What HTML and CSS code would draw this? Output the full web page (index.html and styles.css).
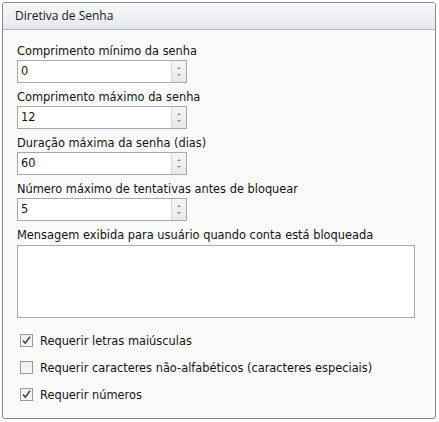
FILE: index.html
```html
<!DOCTYPE html>
<html>
<head>
<meta charset="utf-8">
<link rel="stylesheet" href="styles.css">
</head>
<body>
<div class="panel">
  <div class="header">Diretiva de Senha</div>
  <div class="content">
    <div class="field">
      <div class="label">Comprimento mínimo da senha</div>
      <div class="spin"><span class="val">0</span><span class="btns"><span class="up"></span><span class="down"></span></span></div>
    </div>
    <div class="field">
      <div class="label">Comprimento máximo da senha</div>
      <div class="spin"><span class="val">12</span><span class="btns"><span class="up"></span><span class="down"></span></span></div>
    </div>
    <div class="field">
      <div class="label">Duração máxima da senha (dias)</div>
      <div class="spin"><span class="val">60</span><span class="btns"><span class="up"></span><span class="down"></span></span></div>
    </div>
    <div class="field">
      <div class="label">Número máximo de tentativas antes de bloquear</div>
      <div class="spin"><span class="val">5</span><span class="btns"><span class="up"></span><span class="down"></span></span></div>
    </div>
    <div class="field">
      <div class="label">Mensagem exibida para usuário quando conta está bloqueada</div>
      <div class="textarea"></div>
    </div>
    <div class="checks">
      <div class="check"><span class="box on"><svg width="11" height="11" viewBox="0 0 11 11"><path d="M2 5.5 L4.3 8.3 L9 1.8" fill="none" stroke="#4a4a4a" stroke-width="1.6"/></svg></span>Requerir letras maiúsculas</div>
      <div class="check"><span class="box"></span>Requerir caracteres não-alfabéticos (caracteres especiais)</div>
      <div class="check"><span class="box on"><svg width="11" height="11" viewBox="0 0 11 11"><path d="M2 5.5 L4.3 8.3 L9 1.8" fill="none" stroke="#4a4a4a" stroke-width="1.6"/></svg></span>Requerir números</div>
    </div>
  </div>
</div>
</body>
</html>
```

FILE: styles.css
```css
html, body {
  margin: 0;
  padding: 0;
  background: #ffffff;
}
body {
  padding: 2px;
  font-family: "DejaVu Sans", Verdana, sans-serif;
  font-size: 11.4px;
  color: #141414;
}
.panel {
  width: 434px;
  height: 417px;
  box-sizing: border-box;
  border: 1px solid #8a8a8a;
  border-radius: 3px;
  background: #fafafa;
  overflow: hidden;
}
.header {
  height: 27px;
  box-sizing: border-box;
  border-bottom: 1px solid #b4b6bc;
  background: linear-gradient(#f7f8fc, #e6e8ee);
  font-family: "Open Sans", "Noto Sans", sans-serif;
  font-size: 12px;
  line-height: 26px;
  padding-left: 12px;
  color: #1a1a1a;
}
.content {
  padding: 13px 0 0 14px;
}
.field {
  display: flex;
  flex-direction: column;
}
.label {
  height: 17px;
  line-height: 17px;
}
.spin {
  width: 170px;
  height: 23px;
  box-sizing: border-box;
  border: 1px solid #a9a9a9;
  background: #ffffff;
  display: flex;
  margin-bottom: 6px;
}
.val {
  flex: 1;
  padding-left: 3px;
  line-height: 21px;
}
.btns {
  width: 15px;
  border-left: 1px solid #d6d6d6;
  background: linear-gradient(#f6f6f6, #e8e8e8);
  display: flex;
  flex-direction: column;
  align-items: center;
  justify-content: space-around;
  padding: 3px 0;
  box-sizing: border-box;
}
.up, .down {
  width: 0;
  height: 0;
  border-left: 2px solid transparent;
  border-right: 2px solid transparent;
}
.up { border-bottom: 2px solid #8a8a8a; }
.down { border-top: 2px solid #8a8a8a; }
.textarea {
  width: 398px;
  height: 73px;
  box-sizing: border-box;
  border: 1px solid #a9a9a9;
  background: #ffffff;
  margin-top: 1px;
}
.checks {
  padding-top: 14px;
  padding-left: 3px;
  display: flex;
  flex-direction: column;
  gap: 10px;
}
.check {
  display: flex;
  align-items: center;
  height: 17px;
}
.box {
  width: 13px;
  height: 13px;
  box-sizing: border-box;
  border: 1px solid #9a9a9a;
  background: linear-gradient(#eeeeee, #f8f8f8);
  margin-right: 7px;
  display: flex;
  align-items: center;
  justify-content: center;
}
```
